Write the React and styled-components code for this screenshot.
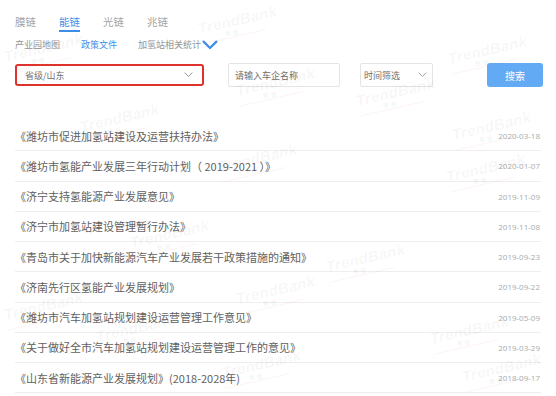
import React from 'react';
import styled, { createGlobalStyle } from 'styled-components';

const GlobalStyle = createGlobalStyle`
    html, body {
        margin: 0;
        padding: 0;
        background: #fff;
    }
    body {
        font-family: "Noto Sans CJK SC", "Noto Sans", sans-serif;
        color: #555;
    }
`;

const topTabs = ['膜链', '能链', '光链', '兆链'];
const subTabs = ['产业园地图', '政策文件', '加氢站相关统计'];

const policies = [
    { title: '《潍坊市促进加氢站建设及运营扶持办法》', date: '2020-03-18' },
    { title: '《潍坊市氢能产业发展三年行动计划（ 2019-2021 ）》', date: '2020-01-07' },
    { title: '《济宁支持氢能源产业发展意见》', date: '2019-11-09' },
    { title: '《济宁市加氢站建设管理暂行办法》', date: '2019-11-08' },
    { title: '《青岛市关于加快新能源汽车产业发展若干政策措施的通知》', date: '2019-09-23' },
    { title: '《济南先行区氢能产业发展规划》', date: '2019-09-22' },
    { title: '《潍坊市汽车加氢站规划建设运营管理工作意见》', date: '2019-05-09' },
    { title: '《关于做好全市汽车加氢站规划建设运营管理工作的意见》', date: '2019-03-29' },
    { title: '《山东省新能源产业发展规划》(2018-2028年)', date: '2018-09-17' },
];

// faint watermark stamps scattered over the page
const marks = [
    [198, 12], [448, 42], [4, 40], [236, 74], [356, 84], [452, 118],
    [80, 110], [218, 150], [446, 160], [130, 226], [326, 250], [236, 282],
    [4, 298], [96, 320], [430, 322], [222, 356], [462, 360],
];

const Chevron = ({ size = 9, color = '#999', stroke = 1 }) => (
    <svg width={size} height={size * 0.6} viewBox="0 0 10 6" fill="none">
        <path d="M1 1l4 4 4-4" stroke={color} strokeWidth={stroke} strokeLinecap="round" strokeLinejoin="round" />
    </svg>
);

function App() {
    return (
        <>
            <GlobalStyle />
            <Page>
                <TopTabs>
                    {topTabs.map((t) => (
                        <TopTab key={t} $active={t === '能链'}>{t}</TopTab>
                    ))}
                </TopTabs>
                <SubTabs>
                    {subTabs.map((t) => (
                        <SubTab key={t} $active={t === '政策文件'}>
                            {t}
                            {t === '加氢站相关统计' && <Chevron size={16} color="#3d8ee8" stroke={1.4} />}
                        </SubTab>
                    ))}
                </SubTabs>
                <Filters>
                    <RegionSelect>
                        <span>省级/山东</span>
                        <Chevron size={9} color="#888" />
                    </RegionSelect>
                    <SearchInput placeholder="请输入车企名称" />
                    <TimeSelect>
                        <span>时间筛选</span>
                        <Chevron size={9} color="#999" />
                    </TimeSelect>
                    <SearchButton>搜索</SearchButton>
                </Filters>
                <List>
                    {policies.map((p) => (
                        <Row key={p.date + p.title}>
                            <Title>{p.title}</Title>
                            <Date>{p.date}</Date>
                        </Row>
                    ))}
                </List>
                {marks.map(([x, y], i) => (
                    <Mark key={i} style={{ left: x, top: y }}>
                        TrendBank
                        <small>数据</small>
                    </Mark>
                ))}
            </Page>
        </>
    );
}

const Page = styled.div`
    position: relative;
    width: 556px;
    height: 396px;
    box-sizing: border-box;
    padding: 15px 13px 0 15px;
    overflow: hidden;
    background: #fff;
`;

const TopTabs = styled.div`
    display: flex;
    gap: 23px;
`;

const TopTab = styled.div`
    font-size: 10.5px;
    line-height: 14px;
    padding-bottom: 1px;
    border-bottom: 2px solid ${(p) => (p.$active ? '#3d8ee8' : 'transparent')};
    color: ${(p) => (p.$active ? '#3d8ee8' : '#a3a3a3')};
`;

const SubTabs = styled.div`
    display: flex;
    gap: 21px;
    margin-top: 7px;
`;

const SubTab = styled.div`
    display: flex;
    align-items: center;
    gap: 1px;
    font-size: 9px;
    line-height: 12px;
    color: ${(p) => (p.$active ? '#3d8ee8' : '#949494')};
`;

const Filters = styled.div`
    display: flex;
    align-items: center;
    margin-top: 12px;
    height: 24px;
`;

const RegionSelect = styled.div`
    width: 189px;
    height: 22px;
    box-sizing: border-box;
    border: 2px solid #e0322c;
    border-radius: 3px;
    padding: 0 9px 0 8px;
    display: flex;
    align-items: center;
    justify-content: space-between;
    font-size: 9px;
    color: #707070;
    margin-right: 24px;
`;

const SearchInput = styled.input`
    width: 112px;
    height: 24px;
    box-sizing: border-box;
    border: 1px solid #e4e4e4;
    border-radius: 2px;
    padding: 0 6px;
    font-family: inherit;
    font-size: 9px;
    outline: none;
    margin-right: 20px;
    &::placeholder {
        color: #707070;
    }
`;

const TimeSelect = styled.div`
    width: 73px;
    height: 24px;
    box-sizing: border-box;
    border: 1px solid #e4e4e4;
    border-radius: 2px;
    padding: 0 5px 0 3px;
    display: flex;
    align-items: center;
    justify-content: space-between;
    font-size: 9px;
    color: #707070;
`;

const SearchButton = styled.button`
    margin-left: auto;
    width: 56px;
    height: 24px;
    border: none;
    border-radius: 3px;
    background: #63aaf4;
    color: #fff;
    font-family: inherit;
    font-size: 10px;
    padding: 0;
`;

const List = styled.div`
    margin-top: 34px;
    margin-right: 2px;
`;

const Row = styled.div`
    display: flex;
    align-items: center;
    justify-content: space-between;
    height: 30.25px;
    box-sizing: border-box;
    border-bottom: 1px solid #eeeeee;
`;

const Title = styled.span`
    font-size: 11px;
    color: #616161;
    white-space: nowrap;
`;

const Date = styled.span`
    font-family: "Open Sans", "Noto Sans", sans-serif;
    font-size: 8px;
    color: #ababab;
    padding-right: 1px;
`;

const Mark = styled.div`
    position: absolute;
    transform: rotate(-13deg);
    font-family: "Liberation Sans", Arial, sans-serif;
    font-size: 15px;
    font-weight: bold;
    font-style: italic;
    letter-spacing: 0.3px;
    color: rgba(0, 0, 0, 0.05);
    pointer-events: none;
    line-height: 15px;
    small {
        display: block;
        font-size: 6px;
        line-height: 8px;
        font-style: normal;
        padding-left: 26px;
        color: rgba(0, 0, 0, 0.055);
        border-bottom: 1px solid rgba(230, 120, 100, 0.08);
        width: 40px;
    }
`;

export default App;
